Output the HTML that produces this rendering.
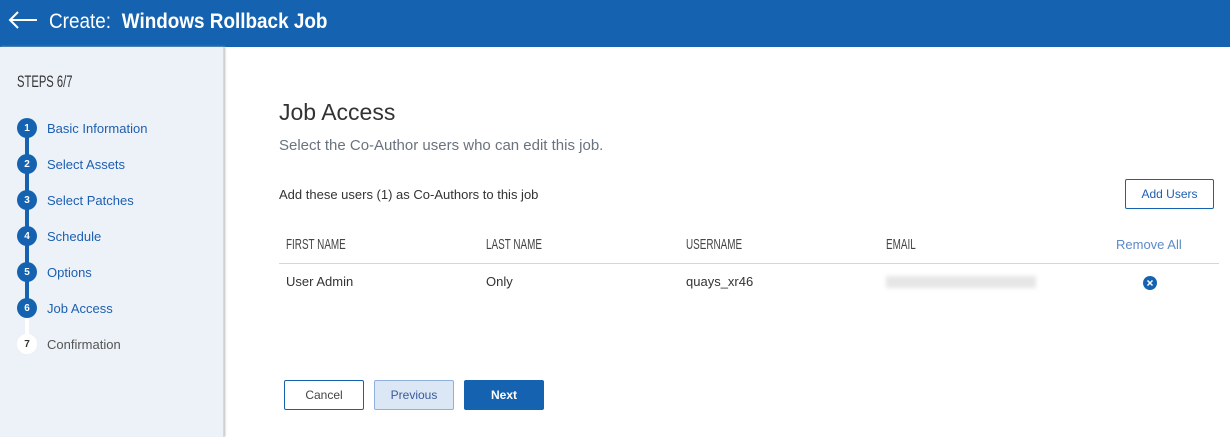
<!DOCTYPE html>
<html><head><meta charset="utf-8"><style>
*{margin:0;padding:0;box-sizing:border-box}
body{width:1230px;height:437px;overflow:hidden;background:#fff;font-family:"Liberation Sans",sans-serif;position:relative}
.hdr{position:absolute;left:0;top:0;width:1230px;height:47px;background:#1563b0;color:#fff}
.hdr .t{position:absolute;left:49px;top:10px;font-size:21px;white-space:nowrap;transform:scaleX(.9);transform-origin:left center}
.hdr b{margin-left:12px}
.side{position:absolute;left:0;top:47px;width:224px;height:390px;background:#edf2f9;border-right:1px solid #d5d9df;box-shadow:1px 0 2px #bbb}
.cond{display:inline-block;transform:scaleX(.66);transform-origin:left center;white-space:nowrap}
.steps{position:absolute;left:17px;top:72px;color:#333}
.line{position:absolute;left:25px;width:4px;background:#1563b0}
.c{position:absolute;left:17px;width:20px;height:20px;border-radius:50%;background:#1563b0;color:#fff;font-size:10px;font-weight:bold;display:flex;align-items:center;justify-content:center}
.lbl{position:absolute;left:47px;font-size:13px;color:#1d5fb0}
.abs{position:absolute;white-space:nowrap}
.th{font-size:15px;color:#444;top:236px}
.td{font-size:13px;color:#333;top:274px}
.btn{position:absolute;top:380px;height:30px;font-size:12px;text-align:center;line-height:28px;border-radius:2px}
</style></head><body>
<div class="hdr">
<svg style="position:absolute;left:7px;top:10px" width="32" height="20" viewBox="0 0 32 20"><path d="M30 10H3M11 2L3 10L11 18" stroke="#fff" stroke-width="2" fill="none"/></svg>
<div class="t">Create:<b>Windows Rollback Job</b></div>
</div>
<div class="side">
</div>
<div class="steps"><span class="cond" style="font-size:17px">STEPS 6/7</span></div>
<div class="line" style="top:128px;height:180px"></div>
<div class="line" style="top:308px;height:36px;background:#fff"></div>
<div class="c" style="top:118px">1</div><div class="lbl" style="top:121px">Basic Information</div>
<div class="c" style="top:154px">2</div><div class="lbl" style="top:157px">Select Assets</div>
<div class="c" style="top:190px">3</div><div class="lbl" style="top:193px">Select Patches</div>
<div class="c" style="top:226px">4</div><div class="lbl" style="top:229px">Schedule</div>
<div class="c" style="top:262px">5</div><div class="lbl" style="top:265px">Options</div>
<div class="c" style="top:298px">6</div><div class="lbl" style="top:301px">Job Access</div>
<div class="c" style="top:334px;background:#fff;color:#333">7</div><div class="lbl" style="top:337px;color:#555">Confirmation</div>

<div class="abs" style="left:279px;top:99px;font-size:23px;color:#333">Job Access</div>
<div class="abs" style="left:279px;top:137px;font-size:15px;color:#6a737d">Select the Co-Author users who can edit this job.</div>
<div class="abs" style="left:279px;top:187px;font-size:13px;color:#333">Add these users (1) as Co-Authors to this job</div>
<div class="btn" style="left:1125px;top:179px;width:89px;border:1px solid #1563b0;color:#1d5fb0">Add Users</div>

<div class="abs th" style="left:286px"><span class="cond">FIRST NAME</span></div>
<div class="abs th" style="left:486px"><span class="cond">LAST NAME</span></div>
<div class="abs th" style="left:686px"><span class="cond">USERNAME</span></div>
<div class="abs th" style="left:886px"><span class="cond">EMAIL</span></div>
<div class="abs" style="left:1116px;top:237px;font-size:13px;color:#5b8ac9">Remove All</div>
<div class="abs" style="left:279px;top:263px;width:940px;height:1px;background:#d6d6d6"></div>
<div class="abs td" style="left:286px">User Admin</div>
<div class="abs td" style="left:486px">Only</div>
<div class="abs td" style="left:686px">quays_xr46</div>
<div class="abs" style="left:886px;top:276px;width:150px;height:12px;background:#e6e6e6;filter:blur(2px)"></div>
<svg class="abs" style="left:1143px;top:276px" width="14" height="14" viewBox="0 0 14 14"><circle cx="7" cy="7" r="7" fill="#1563b0"/><path d="M4.5 4.5L9.5 9.5M9.5 4.5L4.5 9.5" stroke="#fff" stroke-width="1.5"/></svg>

<div class="btn" style="left:284px;width:80px;border:1px solid #1563b0;color:#444">Cancel</div>
<div class="btn" style="left:374px;width:80px;border:1px solid #8fb1dc;background:#dbe7f5;color:#3a5a9a">Previous</div>
<div class="btn" style="left:464px;width:80px;background:#1563b0;color:#fff;font-weight:bold;line-height:30px">Next</div>
</body></html>
